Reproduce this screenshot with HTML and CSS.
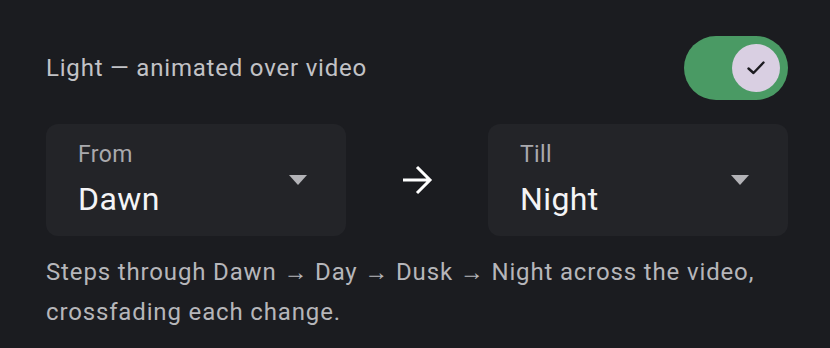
FILE: index.html
```html
<!DOCTYPE html>
<html lang="en">
<head>
    <meta charset="UTF-8">
    <meta name="viewport" content="width=device-width, initial-scale=1.0">
    <title>Light</title>
    <link rel="stylesheet" href="styles.css">
</head>
<body>

<div class="panel">
    <div class="row-top">
        <span class="row-title">Light — animated over video</span>
        <div class="switch on">
            <div class="thumb">
                <svg width="20" height="20" viewBox="0 0 20 20">
                    <path d="M2.5 10.5 L7.5 15 L17.5 4.5" fill="none" stroke="#1c1b20" stroke-width="2.4" stroke-linecap="round" stroke-linejoin="round"/>
                </svg>
            </div>
        </div>
    </div>

    <div class="range">
        <div class="select">
            <div class="select-text">
                <span class="select-label">From</span>
                <span class="select-value">Dawn</span>
            </div>
            <span class="caret"></span>
        </div>
        <div class="range-arrow">
            <svg width="32" height="32" viewBox="0 0 32 32">
                <path d="M2 16 H29 M16 3 L29 16 L16 29" fill="none" stroke="#ffffff" stroke-width="3" stroke-linejoin="miter"/>
            </svg>
        </div>
        <div class="select">
            <div class="select-text">
                <span class="select-label">Till</span>
                <span class="select-value">Night</span>
            </div>
            <span class="caret"></span>
        </div>
    </div>

    <p class="hint">Steps through Dawn → Day → Dusk → Night across the video, crossfading each change.</p>
</div>

</body>
</html>
```

FILE: styles.css
```css
body {
    margin: 0;
    padding: 0;
    background-color: #1b1c20;
    font-family: Roboto, "Liberation Sans", sans-serif;
    color: #e6e6e8;
}

.panel {
    width: 742px;
    padding: 36px 0 0 46px;
}

.row-top {
    display: flex;
    justify-content: space-between;
    align-items: center;
    height: 64px;
}

.row-title {
    font-size: 24px;
    letter-spacing: 0.8px;
    color: #c2c2c6;
}

.switch {
    width: 104px;
    height: 64px;
    border-radius: 32px;
    background-color: #4a9a64;
    display: flex;
    align-items: center;
    justify-content: flex-end;
    padding: 0 8px;
    box-sizing: border-box;
}

.thumb {
    width: 48px;
    height: 48px;
    border-radius: 50%;
    background-color: #d9cfe2;
    display: flex;
    align-items: center;
    justify-content: center;
}

.range {
    display: flex;
    align-items: center;
    justify-content: space-between;
    margin-top: 24px;
}

.select {
    width: 300px;
    height: 112px;
    box-sizing: border-box;
    padding: 0 39px 0 32px;
    background-color: #232428;
    border-radius: 12px;
    display: flex;
    align-items: center;
    justify-content: space-between;
}

.select-text {
    display: flex;
    flex-direction: column;
}

.select-label {
    font-size: 23px;
    line-height: 28px;
    letter-spacing: 0.4px;
    color: #a9a9ad;
}

.select-value {
    margin-top: 10px;
    font-size: 32px;
    line-height: 40px;
    letter-spacing: 0.4px;
    color: #f4f4f6;
}

.caret {
    width: 0;
    height: 0;
    border-left: 9px solid transparent;
    border-right: 9px solid transparent;
    border-top: 10px solid #b3b3b7;
}

.range-arrow {
    display: flex;
    align-items: center;
}

.hint {
    margin: 16px 0 0;
    font-size: 24px;
    line-height: 40px;
    letter-spacing: 0.85px;
    color: #b6b6ba;
}
```
